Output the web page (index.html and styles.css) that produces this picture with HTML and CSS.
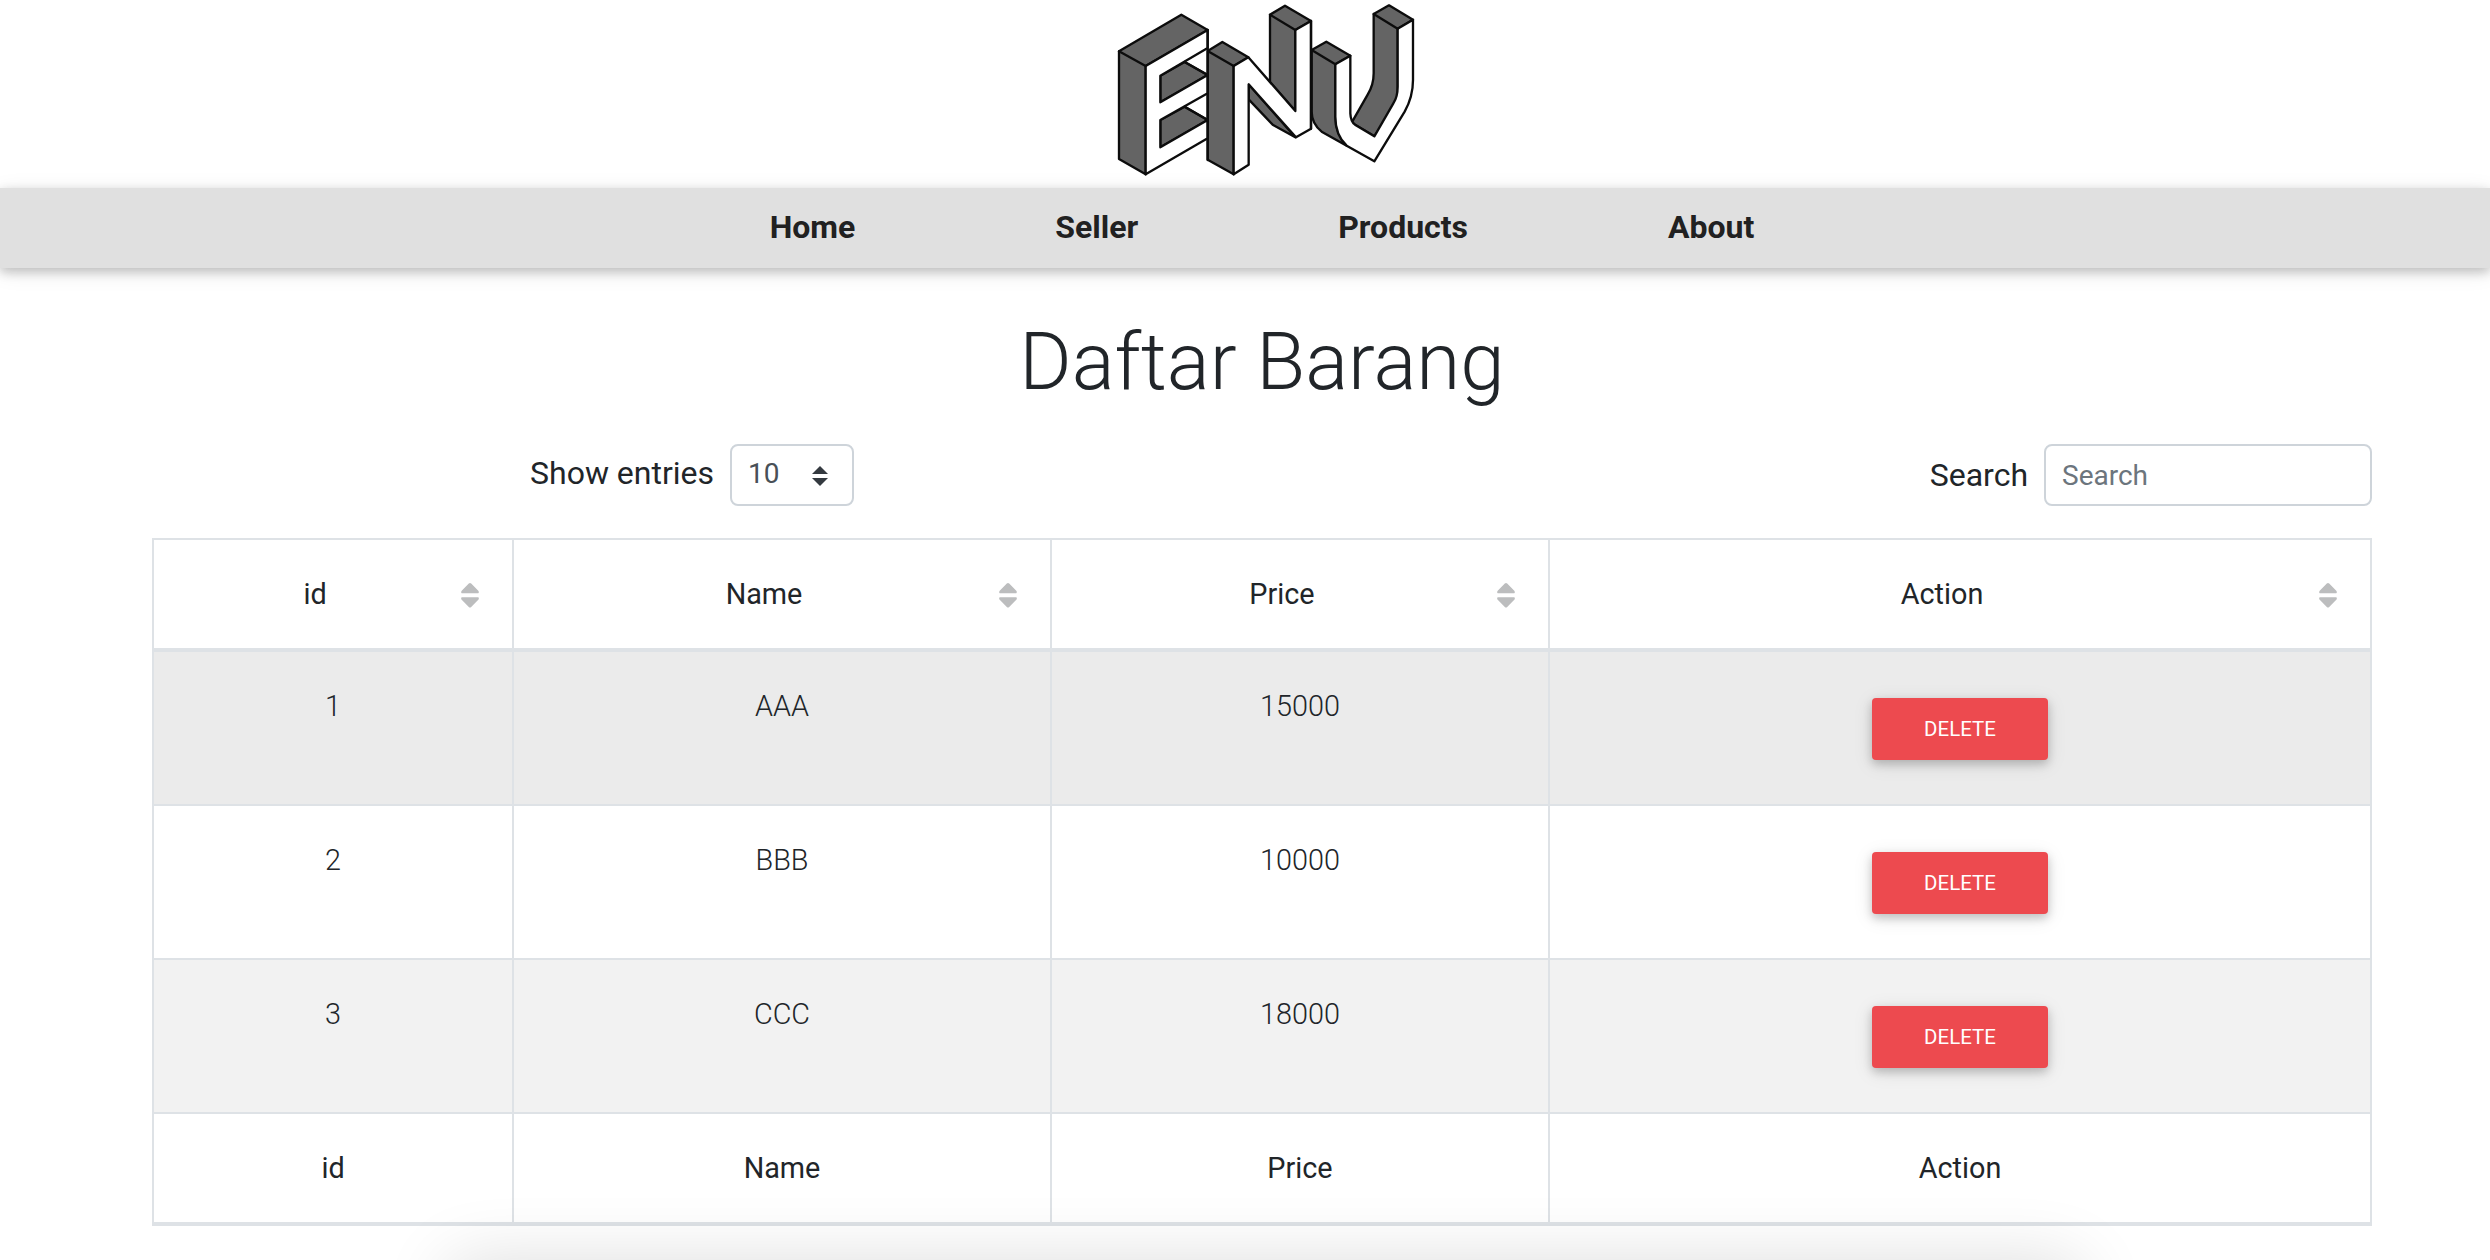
FILE: index.html
```html
<!DOCTYPE html>
<html lang="id">
<head>
<meta charset="utf-8">
<title>Daftar Barang</title>
<link rel="stylesheet" href="styles.css">
</head>
<body>
<svg class="sprite" aria-hidden="true">
  <symbol id="sort" viewBox="0 0 18 25">
    <path d="M7.800.6Q9-.6 10.200.6L17.300 7.800Q18.400 9.200 17.300 10.300H.7Q-.4 9.200.7 7.800ZM.7 14.300H17.300Q18.400 15.400 17.300 16.800L10.200 24Q9 25.200 7.800 24L.7 16.800Q-.4 15.400.7 14.300Z"/>
  </symbol>
</svg>

<header class="brand">
  <svg class="logo" viewBox="0 0 990 564" role="img" aria-label="ENV">
    <g class="dark">
      <path d="M57 154 244 44 323 90 137 198V523L57 477Z"/>
      <path d="M181 227 254 186 323 225 181 307ZM181 360 254 320 323 360 181 442Z"/>
      <path d="M323 153 367 126 445 172 401 198V523L323 479Z"/>
      <path d="M510 44 555 17 633 63 586 90V333L510 246Z"/>
      <path d="M446 253 586 412 518 374 446 298Z"/>
      <path d="M635 150 679 125 751 167 706 193V350Q706 400 740 437L665 395Q635 370 635 335Z"/>
      <path d="M821 42 867 16 939 59 893 86V280Q893 300 884 318L823 409 755 368 803 284Q821 255 821 220Z"/>
    </g>
    <g class="light">
      <path d="M137 198 323 90V144L181 227V307L323 225V280L181 360V442L323 360V415L137 523Z"/>
      <path d="M401 198 445 172 586 333V90L633 63V386L588 412 446 253V494L401 523Z"/>
      <path d="M706 193 751 167V340Q752 364 765 374L823 409 880 310Q893 290 893 260V86L939 59V240Q939 290 914 335L823 484 740 437Q706 405 706 350Z"/>
    </g>
    <path class="edge" d="M57 154 137 198M323 153 401 198M510 44 586 90M635 150 706 193M821 42 893 86M254 186 323 225M254 320 323 360M323 90V480M633 63V386"/>
  </svg>
</header>

<nav class="menu">
  <a>Home</a>
  <a>Seller</a>
  <a>Products</a>
  <a>About</a>
</nav>

<main class="content">
  <h1 class="title">Daftar Barang</h1>

  <div class="toolbar">
    <label class="entries"><span>Show entries</span>
      <span class="select">10
        <svg viewBox="0 0 16 20" width="16" height="20"><path d="M0 8 8 0 16 8ZM0 12H16L8 20Z"/></svg>
      </span>
    </label>
    <label class="search"><span>Search</span><input type="text" placeholder="Search"></label>
  </div>

  <table class="products">
    <colgroup><col class="c-id"><col class="c-name"><col class="c-price"><col class="c-action"></colgroup>
    <thead>
      <tr>
        <th><div class="head">id<svg><use href="#sort"/></svg></div></th>
        <th><div class="head">Name<svg><use href="#sort"/></svg></div></th>
        <th><div class="head">Price<svg><use href="#sort"/></svg></div></th>
        <th><div class="head">Action<svg><use href="#sort"/></svg></div></th>
      </tr>
    </thead>
    <tbody>
      <tr class="hovered"><td>1</td><td>AAA</td><td>15000</td><td><button class="delete">DELETE</button></td></tr>
      <tr><td>2</td><td>BBB</td><td>10000</td><td><button class="delete">DELETE</button></td></tr>
      <tr class="odd"><td>3</td><td>CCC</td><td>18000</td><td><button class="delete">DELETE</button></td></tr>
    </tbody>
    <tfoot>
      <tr><th>id</th><th>Name</th><th>Price</th><th>Action</th></tr>
    </tfoot>
  </table>
</main>
<div class="bottom-shade"></div>
</body>
</html>
```
FILE: styles.css
```css
* { box-sizing: border-box; }

body {
  margin: 0;
  height: 1260px;
  overflow: hidden;
  background: #fff;
  color: #212529;
  font: 400 32px/48px Roboto, sans-serif;
}

.sprite { display: none; }

.brand {
  height: 188px;
  padding-left: 1100px;
}
.logo { display: block; width: 330px; height: 188px; }
.logo path { stroke: #0c0c0c; stroke-width: 7; stroke-linejoin: round; stroke-linecap: round; }
.logo .dark { fill: #646464; }
.logo .light { fill: #fff; }
.logo .edge { fill: none; }

.menu {
  position: relative;
  display: flex;
  justify-content: center;
  gap: 200px;
  height: 80px;
  padding-top: 15px;
  padding-left: 34px;
  background: #e0e0e0;
  color: #212121;
  font-weight: 700;
  box-shadow: 0 4px 10px rgba(0, 0, 0, .2), 0 4px 20px rgba(0, 0, 0, .1);
}

.content { padding: 0 118px 0 152px; }

.title {
  margin: 46px 0 0;
  font-size: 80px;
  line-height: 96px;
  font-weight: 300;
  text-align: center;
}

.toolbar {
  display: flex;
  justify-content: space-between;
  height: 128px;
  padding: 34px 0 0 378px;
}
.entries, .search { display: flex; height: 62px; }
.entries { gap: 16px; line-height: 58px; }
.search { gap: 16px; line-height: 62px; }

.select, .search input {
  height: 62px;
  border: 2px solid #ced4da;
  border-radius: 8px;
  background: #fff;
  font: 400 28px/58px Roboto, sans-serif;
}
.select {
  display: flex;
  align-items: center;
  justify-content: space-between;
  width: 124px;
  padding: 0 24px 2px 16px;
  color: #495057;
}
.select svg { fill: #343a40; margin-top: 4px; }
.search input { width: 328px; padding: 0 16px; }
.search input::placeholder { color: #6c757d; opacity: 1; }

.products {
  width: 2220px;
  table-layout: fixed;
  border-spacing: 0;
  border-top: 2px solid #dee2e6;
  border-left: 2px solid #dee2e6;
  font-size: 28.8px;
  line-height: 44px;
  text-align: center;
}
.c-id { width: 360px; }
.c-name { width: 538px; }
.c-price { width: 498px; }
.c-action { width: 822px; }

.products th, .products td {
  padding: 0;
  border-right: 2px solid #dee2e6;
  border-bottom: 2px solid #dee2e6;
}
.products th { height: 112px; border-bottom-width: 4px; font-weight: 400; }
.products td { height: 154px; padding-top: 32px; vertical-align: top; font-weight: 300; }
.hovered { background: #ebebeb; }
.odd { background: #f2f2f2; }

.head { position: relative; padding-right: 36px; }
.head svg {
  position: absolute;
  right: 33px;
  top: 11px;
  width: 18px;
  height: 25px;
  fill: #bcbdbe;
}

.delete {
  display: block;
  width: 176px;
  height: 62px;
  margin: 14px auto 0;
  padding: 0;
  border: 0;
  border-radius: 4px;
  background: #ed4a4f;
  color: #fff;
  font: 400 20.48px/62px Roboto, sans-serif;
  box-shadow: 0 4px 10px rgba(0, 0, 0, .2), 0 4px 20px rgba(0, 0, 0, .1);
}

/* Soft shade rising from beneath the lower edge of the window */
.bottom-shade {
  position: fixed;
  left: 450px;
  right: 410px;
  top: 1262px;
  height: 200px;
  border-radius: 12px;
  box-shadow: 0 0 70px rgba(0, 0, 0, .14);
}
```
